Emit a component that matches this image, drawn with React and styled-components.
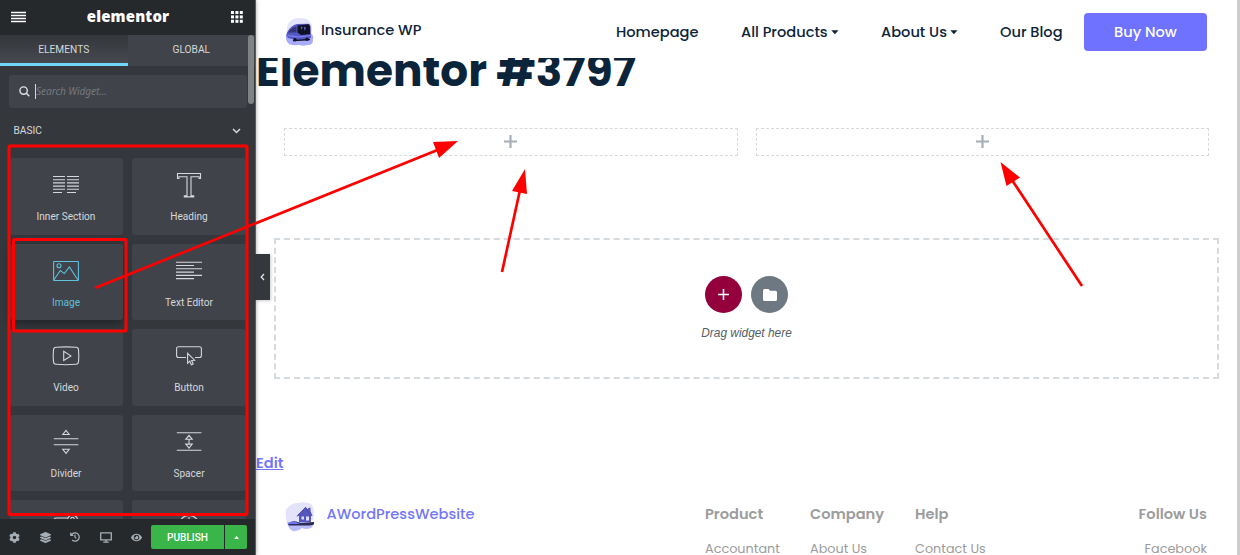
import React from "react";
import styled, { createGlobalStyle, css } from "styled-components";
import { FaCog, FaLayerGroup, FaHistory, FaEye } from "react-icons/fa";

const GlobalStyle = createGlobalStyle`
  *, *::before, *::after { box-sizing: border-box; }
  body { margin: 0; background: #fff; overflow: hidden; }
  button { font: inherit; border: 0; padding: 0; cursor: pointer; }
`;

const poppins = `Poppins, Inter, "Open Sans", sans-serif`;
const red = "#ff0000";

const Editor = styled.div`
  position: relative;
  display: flex;
  width: 1240px;
  height: 555px;
  overflow: hidden;
`;

/* ---------- Panel ---------- */
const Panel = styled.aside`
  position: relative;
  z-index: 2;
  display: flex;
  flex-direction: column;
  flex: none;
  width: 256px;
  height: 555px;
  background: #34383c;
  border-right: 1px solid #5b5e61;
  box-shadow: 0 0 4px rgba(0, 0, 0, 0.35);
  font-family: Roboto, sans-serif;
  color: #d5d8dc;
`;

const PanelHeader = styled.header`
  display: flex;
  align-items: center;
  justify-content: space-between;
  flex: none;
  height: 35px;
  padding: 0 12px 2px 11px;
  background: #26292c;
  color: #fff;
`;

const Brand = styled.div`
  padding: 0 1px 2px 0;
  font: 800 15px/28px "Open Sans", sans-serif;
  letter-spacing: 0.15px;
`;

const Tabs = styled.nav`
  display: flex;
  flex: none;
  height: 31px;
`;

const Tab = styled.div`
  flex: 1;
  height: 31px;
  font-size: 10.2px;
  line-height: 29px;
  text-align: center;
  text-transform: uppercase;
  background: #404349;
  ${(p) =>
    p.$active &&
    css`
      background: linear-gradient(#33373b, #46494f);
      border-bottom: 3px solid #71d7f7;
    `}
`;

const SearchBox = styled.div`
  display: flex;
  align-items: center;
  flex: none;
  height: 33px;
  margin: 9px 8px 0 9px;
  padding-left: 10px;
  gap: 5px;
  border-radius: 3px;
  background: #404349;
`;

const Placeholder = styled.span`
  height: 15px;
  border-left: 1px solid #d5d8dc;
  color: #74797f;
  font: italic 10.2px/15px "Noto Sans", sans-serif;
  letter-spacing: -0.1px;
`;

const CategoryTitle = styled.div`
  display: flex;
  align-items: center;
  justify-content: space-between;
  flex: none;
  height: 45px;
  padding: 0 14px 0 13.5px;
  font-size: 10.2px;
`;

const Widgets = styled.div`
  display: grid;
  grid-template-columns: 113px 114px;
  grid-auto-rows: 76.5px;
  gap: 9px;
  flex: 1;
  min-height: 0;
  padding: 5px 0 0 10px;
  overflow: hidden;
`;

const Tile = styled.div`
  display: flex;
  flex-direction: column;
  align-items: center;
  padding: 12px ${(p) => (p.$left ? 1 : 0)}px 0 ${(p) => (p.$left ? 0 : 0)}px;
  border-radius: 3px;
  background: #404349;
  color: ${(p) => (p.$active ? "#5fc1de" : "#d5d8dc")};
  box-shadow: ${(p) => (p.$active ? "0 4px 10px rgba(0,0,0,.35)" : "none")};
  font-size: 10.1px;
  line-height: 16px;

  svg { display: block; flex: none; margin-bottom: 13px; overflow: visible; }
`;

const PanelFooter = styled.footer`
  display: flex;
  align-items: center;
  flex: none;
  height: 36px;
  padding: 0 8px 0 0;
  background: #26292c;
`;

const FooterTools = styled.div`
  display: flex;
  align-items: center;
  justify-content: space-between;
  width: 142px;
  margin-right: 9px;
  padding-left: 9px;
  color: #a4afb7;
`;

const PublishButton = styled.button`
  width: 73px;
  height: 24px;
  border-radius: 2px 0 0 2px;
  background: #39b54a;
  color: #fff;
  font-size: 10.1px;
  font-weight: 500;
`;

const PublishMore = styled.button`
  display: grid;
  place-items: center;
  width: 22px;
  height: 24px;
  margin-left: 1px;
  border-radius: 0 2px 2px 0;
  background: #39b54a;
`;

const ScrollThumb = styled.div`
  position: absolute;
  top: 35px;
  right: 1px;
  width: 6px;
  height: 69px;
  border-radius: 3px;
  background: #808284;
`;

const CollapseHandle = styled.div`
  position: absolute;
  top: 254px;
  left: 255px;
  display: grid;
  place-items: center;
  width: 14.5px;
  height: 46px;
  background: #34383c;
  box-shadow: 1px 1px 3px rgba(0, 0, 0, 0.2);
`;

/* ---------- Page preview ---------- */
const Preview = styled.main`
  display: flex;
  flex-direction: column;
  flex: 1;
  height: 555px;
  border-right: 3px solid #cdcdcd;
  background: #fff;
  font-family: ${poppins};
  color: #0c2439;
`;

const SiteHeader = styled.header`
  display: flex;
  align-items: flex-start;
  flex: none;
  height: 58px;
  padding-left: 29px;
`;

const SiteName = styled.div`
  width: 301px;
  padding-left: 6px;
  font-size: 14.6px;
  font-weight: 500;
  line-height: 60px;
`;

const LogoSlot = styled.div`
  flex: none;
  width: 30px;
  padding-top: ${(p) => p.$top}px;
  svg { display: block; }
`;

const NavItem = styled.a`
  display: flex;
  align-items: center;
  gap: 3px;
  width: ${(p) => p.$w}px;
  height: 65px;
  font-size: 14.6px;
  font-weight: 500;
  white-space: nowrap;
`;

const BuyButton = styled.button`
  width: 123px;
  height: 38px;
  margin-top: 13px;
  padding-top: 1px;
  border-radius: 4px;
  background: #6e72ff;
  color: #fff;
  font-size: 14.6px;
  font-weight: 500;
`;

const TitleClip = styled.div`
  flex: none;
  height: 70px;
  overflow: hidden;
`;

const PageTitle = styled.h1`
  margin: -16px 0 0;
  font-size: 43.8px;
  font-weight: 700;
  line-height: 58px;
  white-space: nowrap;
`;

const Columns = styled.section`
  display: flex;
  gap: 18px;
  flex: none;
  height: 28px;
  padding-left: 28px;
`;

const DropColumn = styled.div`
  display: grid;
  place-items: center;
  width: 453.5px;
  height: 28px;
  padding: 0 0.5px 1px 0;
  border: 1px dashed #d5dadf;
`;

const DropArea = styled.section`
  display: flex;
  flex-direction: column;
  align-items: center;
  flex: none;
  width: 945px;
  height: 141px;
  margin: 82px 0 0 18px;
  padding-top: 36px;
  border: 2px dashed #d5dadf;
`;

const RoundButtons = styled.div`
  display: flex;
  gap: 9px;
`;

const RoundButton = styled.button`
  display: grid;
  place-items: center;
  width: 37px;
  height: 37px;
  border-radius: 50%;
  background: ${(p) => p.$color};
`;

const DropHint = styled.p`
  margin: 12px 0 0;
  color: #545d66;
  font: italic 11.9px/16px "Liberation Sans", Arial, sans-serif;
`;

const EditLink = styled.a`
  flex: none;
  align-self: flex-start;
  margin-top: 74px;
  color: #7377f7;
  font-size: 14.6px;
  font-weight: 600;
  line-height: 20px;
  text-decoration: underline;
`;

const SiteFooter = styled.footer`
  display: flex;
  flex: none;
  margin-top: 28px;
  padding-left: 29px;
`;

const FooterBrand = styled.div`
  width: 390px;
  padding-left: 11.5px;
  color: #7377f7;
  font-size: 14.6px;
  font-weight: 500;
  line-height: 26px;
`;

const LinkColumn = styled.div`
  width: ${(p) => p.$w}px;
  color: #9c9c9c;
  text-align: ${(p) => (p.$end ? "right" : "left")};
  white-space: nowrap;
`;

const LinkHeading = styled.h4`
  margin: 0;
  font-size: 14.6px;
  font-weight: 600;
  line-height: 26px;
`;

const FooterLink = styled.a`
  display: block;
  margin-top: 11px;
  font-size: 12.8px;
  line-height: 22px;
`;

/* ---------- Annotations ---------- */
const Marks = styled.svg`
  position: absolute;
  inset: 0;
  z-index: 3;
  pointer-events: none;
`;

const Line = ({ children }) => (
  <svg width="26" height="26" viewBox="0 0 26 26" fill="none" stroke="currentColor" strokeWidth="1.1">
    {children}
  </svg>
);

const icons = {
  inner: (
    <Line>
      <path d="M0 6.500h12M0 9.700h12M0 12.900h12M0 16.100h12M0 19.300h12M0 22.500h9M14 6.500h12M14 9.700h12M14 12.900h12M14 16.100h12M14 19.300h12M14 22.500h9" />
    </Line>
  ),
  heading: (
    <Line>
      <path d="M1.500 3.500h23v5h-1.400V6.700H15v19h2.700v1.200H8.300v-1.200H11v-19H2.900v1.800H1.500z" />
    </Line>
  ),
  image: (
    <Line>
      <rect x=".6" y="5.500" width="24.800" height="19" rx=".6" />
      <circle cx="6" cy="9.700" r="2" />
      <path d="m1 23.700 6.300-9.200 4 3.100 5.100-6.700 8.400 12.800" />
    </Line>
  ),
  text: (
    <Line>
      <path d="M0 6.200h26M0 9.500h18M0 12.800h26M0 16.100h18M0 19.400h26M0 22.600h18" />
    </Line>
  ),
  video: (
    <Line>
      <path d="M3 6.300q10-.9 20 0q2.300.200 2.500 2.500.600 6 0 12-.2 2.300-2.500 2.500-10 .9-20 0Q.700 23.100.500 20.800-.1 14.800.500 8.800.700 6.500 3 6.300Z" />
      <path d="M10.700 10.300v9.200l7.200-4.600z" />
    </Line>
  ),
  button: (
    <Line>
      <path d="M10 16.500H2.500q-1.900 0-1.900-2V7.800q0-2 1.900-2h21q1.900 0 1.900 2v6.700q0 2-1.900 2H19" />
      <path d="M11.600 12.400v9.800l2.200-2 1.500 3.600 1.900-.8-1.600-3.500 3-.3z" />
    </Line>
  ),
  divider: (
    <Line>
      <path d="M.800 11.700h24.600M.800 17.700h24.600M9.800 7.500h6.400L13 3.300zM9.800 22.300h6.400L13 26.300z" />
    </Line>
  ),
  spacer: (
    <Line>
      <path d="M.800 5.700h24.600M.800 23.300h24.600M9.800 12.300h6.400L13 8.300zM9.800 17.100h6.400l-3.200 4zM13 12.300v4.800" />
    </Line>
  ),
  maps: (
    <Line>
      <path d="M14.500 6H3Q1 6 1 8v16h24V14" />
      <path d="M14.600 9a5 5 0 1 1 9.800 0c0 2.500-4.900 7-4.900 7s-4.900-4.500-4.900-7z" />
      <circle cx="19.500" cy="7" r="1.700" />
    </Line>
  ),
  icon: (
    <Line>
      <circle cx="13" cy="14" r="10.500" />
      <path d="M13 5v4" />
    </Line>
  ),
};

const widgets = [
  ["inner", "Inner Section"],
  ["heading", "Heading"],
  ["image", "Image"],
  ["text", "Text Editor"],
  ["video", "Video"],
  ["button", "Button"],
  ["divider", "Divider"],
  ["spacer", "Spacer"],
  ["maps", "Google Maps"],
  ["icon", "Icon"],
];

const linkColumns = [
  ["Product", "Accountant"],
  ["Company", "About Us"],
  ["Help", "Contact Us"],
];

const Caret = () => (
  <svg width="8" height="6" viewBox="0 0 8 6"><path d="M.300.300h7.200L3.900 4.300z" fill="#0c2439" /></svg>
);

const Plus = ({ size, color, w = 2 }) => (
  <svg width={size} height={size} viewBox="0 0 12 12">
    <path d="M6 0v12M0 6h12" stroke={color} strokeWidth={w} />
  </svg>
);

const BusLogo = () => (
  <svg width="30" height="29" viewBox="0 0 30 29">
    <path d="M2 10C3 3 8 0 15 0c8 0 12 4 12 10v9H2z" fill="#e3e3fc" />
    <path d="M1 16Q8 14 14 16h12q3 1 2 6 0 5-5 5-5 1.500-9 0-6 1-10-1-4-3-3-10z" fill="#a9acfa" />
    <path d="M2 14.500Q6 7 12 6l11-.3q2.500.200 2.700 3.700l.3 10-4 2.500-9 .6L3 20q-2-2-1-5.500z" fill="#5557c4" />
    <path d="M12.500 7.500 23.500 6.300l1.500 2v8l-9 .7-3.500-2.500z" fill="#111126" />
    <path d="M3 14.500Q6 9.500 11.500 8.500v6z" fill="#353577" />
    <path d="m15.500 9 2-.3-.7 3zM19 8.700l2 1-1.500 3z" fill="#6a6cd0" />
    <path d="m2.500 17.500 11 1.500 12-1.500" stroke="#8588f4" fill="none" />
    <path d="m8 22.700 17-1.200" stroke="#111126" strokeWidth="1.300" />
    <circle cx="10" cy="21.800" r="1.700" fill="#111126" /><circle cx="22" cy="21.300" r="1.700" fill="#111126" />
  </svg>
);

const HouseLogo = () => (
  <svg width="30" height="30" viewBox="0 0 30 30">
    <path d="M1 8Q4 2 12 1q10-2 15 2 3 5 1 15L2 21Q0 15 1 8z" fill="#e3e3fc" />
    <path d="M2 20h26q1 4-2 6-5 2-9 0-4 4-9 3-5-2-6-9z" fill="#b9bbfc" />
    <path d="m12 13.500 8.500-8.500 2 2 2-1.500 1 .5v3l2 5h-1.500v6H14v-6z" fill="#5557bd" />
    <path d="m12 14.500 8.500-9 5 8.500" fill="none" stroke="#4a4ca8" />
    <path d="M16.500 14.500h2.500v3h-2.500zM21 14.500h3v4h-3z" fill="#dedffe" />
    <path d="M3 22q3-3.500 8-2.500l5 1.500 13-1v2.500l-4 1H4z" fill="#2c2c50" />
    <path d="M3 21q4-2.500 8-1l4 2H3z" fill="#6f73fa" />
  </svg>
);

export default function App() {
  return (
    <>
      <GlobalStyle />
      <Editor>
        <Panel>
          <PanelHeader>
            <svg width="15" height="12" viewBox="0 0 15 12"><path d="M0 1.500h15M0 4.500h15M0 7.500h15M0 10.500h15" stroke="#fff" strokeWidth="1.700" /></svg>
            <Brand>elementor</Brand>
            <svg width="12" height="12" viewBox="0 0 12 12" fill="#fff">
              {[0, 4.4, 8.8].map((y) => [0, 4.4, 8.8].map((x) => <rect key={x + "-" + y} x={x} y={y} width="3" height="3" />))}
            </svg>
          </PanelHeader>
          <Tabs>
            <Tab $active>Elements</Tab>
            <Tab>Global</Tab>
          </Tabs>
          <SearchBox>
            <svg width="11" height="11" viewBox="0 0 11 11" fill="none" stroke="#e0e2e5" strokeWidth="1.400"><circle cx="4.600" cy="4.600" r="3.700" /><path d="m7.300 7.300 3 3" /></svg>
            <Placeholder>Search Widget...</Placeholder>
          </SearchBox>
          <CategoryTitle>
            BASIC
            <svg width="9" height="6" viewBox="0 0 9 6" fill="none" stroke="#d5d8dc" strokeWidth="1.500"><path d="m1 1 3.500 3.500L8 1" /></svg>
          </CategoryTitle>
          <Widgets>
            {widgets.map(([icon, label], i) => (
              <Tile key={icon} $active={icon === "image"} $left={i % 2 === 0}>
                {icons[icon]}
                <span>{label}</span>
              </Tile>
            ))}
          </Widgets>
          <PanelFooter>
            <FooterTools>
              <FaCog size={11} />
              <FaLayerGroup size={11} />
              <FaHistory size={10} />
              <svg width="12" height="11" viewBox="0 0 12 11" fill="none" stroke="currentColor" strokeWidth="1.300"><path d="M.700.800h10.600v7H.700zM6 8v2M3.300 10.200h5.400" /></svg>
              <FaEye size={11} />
            </FooterTools>
            <PublishButton>PUBLISH</PublishButton>
            <PublishMore><svg width="5" height="3" viewBox="0 0 5 3"><path d="M0 3h5L2.500 0z" fill="#fff" /></svg></PublishMore>
          </PanelFooter>
          <ScrollThumb />
          <CollapseHandle>
            <svg width="5" height="8" viewBox="0 0 5 8" fill="none" stroke="#e0e2e5" strokeWidth="1.300"><path d="M4 1 1.200 4 4 7" /></svg>
          </CollapseHandle>
        </Panel>

        <Preview>
          <SiteHeader>
            <LogoSlot $top={18}><BusLogo /></LogoSlot>
            <SiteName>Insurance WP</SiteName>
            <NavItem $w={125}>Homepage</NavItem>
            <NavItem $w={140}>All Products<Caret /></NavItem>
            <NavItem $w={119}>About Us<Caret /></NavItem>
            <NavItem $w={84}>Our Blog</NavItem>
            <BuyButton>Buy Now</BuyButton>
          </SiteHeader>
          <TitleClip><PageTitle>Elementor #3797</PageTitle></TitleClip>
          <Columns>
            <DropColumn><Plus size={13} color="#a4afb7" /></DropColumn>
            <DropColumn><Plus size={13} color="#a4afb7" /></DropColumn>
          </Columns>
          <DropArea>
            <RoundButtons>
              <RoundButton $color="#93003c"><Plus size={11} color="#fff" w={1.7} /></RoundButton>
              <RoundButton $color="#6d7882">
                <svg width="14" height="12" viewBox="0 0 14 12"><path d="M1.500 0h4L7 1.700h5.500Q14 1.700 14 3.200v7.300Q14 12 12.500 12h-11Q0 12 0 10.500v-9Q0 0 1.500 0z" fill="#fff" /></svg>
              </RoundButton>
            </RoundButtons>
            <DropHint>Drag widget here</DropHint>
          </DropArea>
          <EditLink>Edit</EditLink>
          <SiteFooter>
            <LogoSlot $top={1}><HouseLogo /></LogoSlot>
            <FooterBrand>AWordPressWebsite</FooterBrand>
            {linkColumns.map(([heading, link]) => (
              <LinkColumn key={heading} $w={105}><LinkHeading>{heading}</LinkHeading><FooterLink>{link}</FooterLink></LinkColumn>
            ))}
            <LinkColumn $w={187} $end><LinkHeading>Follow Us</LinkHeading><FooterLink>Facebook</FooterLink></LinkColumn>
          </SiteFooter>
        </Preview>

        <Marks width="1240" height="555" viewBox="0 0 1240 555" fill="none" stroke={red} strokeWidth="3">
          <rect x="9" y="146" width="238" height="368.500" rx="1" />
          <rect x="13.500" y="239.500" width="112.500" height="91.500" rx="1" />
          <path d="M95 288 440 149M502 272l18-82M1082 286l-70-106" strokeWidth="2.700" />
          <path d="m458 141-25 1 6 16zM525 169l-13 22 15 3zM1000.500 162l6 24 13.500-8.500z" fill={red} stroke="none" />
        </Marks>
      </Editor>
    </>
  );
}
